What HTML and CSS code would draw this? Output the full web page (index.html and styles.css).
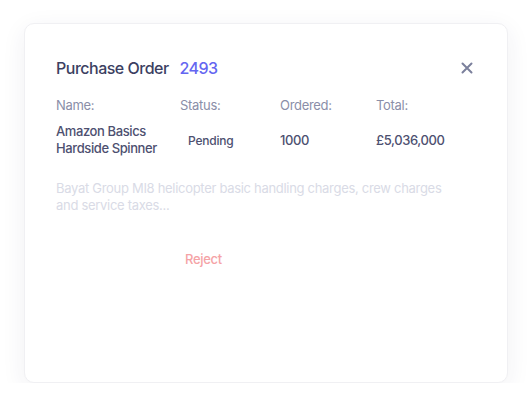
FILE: index.html
```html
<!DOCTYPE html>
<html lang="en">

<head>
    <meta charset="UTF-8">
    <meta name="viewport" content="width=device-width, initial-scale=1.0">
    <title>Purchase Order</title>
    <link rel="stylesheet" href="styles.css">
</head>

<body>
    <div class="card">
        <div class="card-header">
            <h2 class="title">Purchase Order <span class="order-id">2493</span></h2>
            <button type="button" class="close" aria-label="Close">
                <svg width="12" height="12" viewBox="0 0 12 12">
                    <path d="M1.5 1.5 L10.5 10.5 M10.5 1.5 L1.5 10.5" stroke="#7b809c" stroke-width="2" stroke-linecap="round" />
                </svg>
            </button>
        </div>

        <div class="details">
            <div class="label">Name:</div>
            <div class="label">Status:</div>
            <div class="label">Ordered:</div>
            <div class="label">Total:</div>

            <div class="value">Amazon Basics<br>Hardside Spinner</div>
            <div class="value status"><span class="badge">Pending</span></div>
            <div class="value middle">1000</div>
            <div class="value middle">£5,036,000</div>
        </div>

        <p class="description">Bayat Group MI8 helicopter basic handling charges, crew charges and service taxes...</p>

        <div class="actions">
            <button type="button" class="reject">Reject</button>
        </div>
    </div>
</body>

</html>
```

FILE: styles.css
```css
body {
    margin: 0;
    background-color: #fff;
    font-family: 'Inter', 'Liberation Sans', sans-serif;
}

.card {
    box-sizing: border-box;
    width: 484px;
    height: 360px;
    margin: 23px 0 0 24px;
    padding: 34px 31px 0 31px;
    background-color: #fff;
    border: 1px solid #f0f0f3;
    border-radius: 10px;
    box-shadow: 0 6px 24px rgba(40, 44, 80, 0.07);
}

.card-header {
    display: flex;
    align-items: center;
    justify-content: space-between;
}

.title {
    margin: 0;
    font-size: 16px;
    line-height: 20px;
    font-weight: 500;
    color: #3c3f62;
    letter-spacing: -0.5px;
}

.order-id {
    margin-left: 7px;
    color: #6466f1;
}

.close {
    border: none;
    background: none;
    padding: 0;
    margin-right: 3px;
    width: 12px;
    height: 12px;
    cursor: pointer;
}

.details {
    display: grid;
    grid-template-columns: 124px 100px 96px 1fr;
    row-gap: 9px;
    margin-top: 19px;
}

.label {
    font-size: 13px;
    line-height: 17px;
    color: #8a8ea8;
    letter-spacing: -0.3px;
}

.value {
    font-size: 13px;
    line-height: 17px;
    font-weight: 500;
    color: #4d5070;
    letter-spacing: -0.4px;
}

.middle,
.status {
    align-self: center;
}

.badge {
    display: inline-block;
    padding: 2px 8px;
    font-size: 12px;
    letter-spacing: -0.2px;
}

.description {
    margin: 23px 0 0;
    max-width: 395px;
    font-size: 13px;
    line-height: 17px;
    color: #d9dbe6;
    letter-spacing: -0.3px;
}

.actions {
    display: flex;
    margin-top: 37px;
    padding-left: 129px;
}

.reject {
    border: none;
    background: none;
    padding: 0;
    font-family: inherit;
    font-size: 13px;
    font-weight: 500;
    letter-spacing: -0.3px;
    color: #f5a3a6;
    cursor: pointer;
}
```
